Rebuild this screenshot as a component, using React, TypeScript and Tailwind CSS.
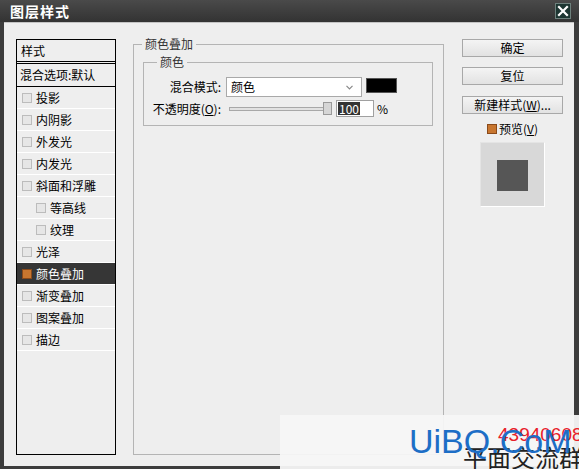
import React from "react";

const FONT = "font-['Noto_Sans_CJK_SC','Noto_Sans',sans-serif]";

const ITEMS: { label: string; sub?: boolean; on?: boolean }[] = [
  { label: "投影" },
  { label: "内阴影" },
  { label: "外发光" },
  { label: "内发光" },
  { label: "斜面和浮雕" },
  { label: "等高线", sub: true },
  { label: "纹理", sub: true },
  { label: "光泽" },
  { label: "颜色叠加", on: true },
  { label: "渐变叠加" },
  { label: "图案叠加" },
  { label: "描边" },
];

function Check({ on }: { on?: boolean }) {
  return (
    <span
      className={
        on
          ? "block w-[10px] h-[10px] shrink-0 bg-[#c8762f] border border-[#8a4a1a]"
          : "block w-[10px] h-[10px] shrink-0 bg-[#e6e6e6] border border-[#bcbcbc]"
      }
    />
  );
}

function Btn({ children }: { children: React.ReactNode }) {
  return (
    <div className="w-[101px] h-[18px] flex items-center justify-center text-[12px] leading-none text-black border border-[#a8a8a8] bg-gradient-to-b from-[#f4f4f4] to-[#e2e2e2]">
      {children}
    </div>
  );
}

export default function App() {
  return (
    <div className={`relative w-[579px] h-[469px] overflow-hidden bg-[#3c3c3c] flex flex-col ${FONT}`}>
      {/* title bar */}
      <div className="h-[22px] shrink-0 flex items-center justify-between pl-[10px] pr-[8px] bg-gradient-to-b from-[#4a4a4a] to-[#333333]">
        <span className="text-[14px] font-bold text-white leading-none tracking-[1px]">图层样式</span>
        <div className="w-[16px] h-[16px] bg-[#1d3632] border border-[#6d807c] flex items-center justify-center">
          <svg width="12" height="12" viewBox="0 0 12 12">
            <path d="M2 2 L10 10 M10 2 L2 10" stroke="#ffffff" strokeWidth="2.2" strokeLinecap="square" />
          </svg>
        </div>
      </div>

      {/* body */}
      <div className="ml-[4px] w-[570px] h-[444px] bg-[#eeeeee] border-t border-[#c4c4c4] flex items-start pt-[13px] pl-[12px] text-[12px] leading-[16px] text-black">
        {/* left list */}
        <div className="mt-[3px] w-[100px] h-[416px] border border-black bg-[#eeeeee] flex flex-col">
          <div className="h-[22px] border-b border-black flex items-center pl-[4px]">样式</div>
          <div className="h-[1px]" />
          <div className="h-[24px] border-y border-black flex items-center pl-[3px]">混合选项:默认</div>
          {ITEMS.map((it) => (
            <div
              key={it.label}
              className={`h-[22px] border-b border-white flex items-center gap-[4px] ${it.sub ? "pl-[19px]" : "pl-[5px]"} ${
                it.on ? "bg-[#363636] text-white" : ""
              }`}
            >
              <Check on={it.on} />
              <span>{it.label}</span>
            </div>
          ))}
        </div>

        {/* main group */}
        <fieldset className="ml-[17px] w-[311px] h-[419px] border border-[#b4b4b4]">
          <legend className="ml-[8px] px-[3px] text-[#333]">颜色叠加</legend>
          <fieldset className="ml-[9px] mt-[2px] w-[290px] border border-[#b4b4b4] pb-[8px]">
            <legend className="ml-[13px] px-[3px] text-[#333]">颜色</legend>
            <div className="mt-[7px] flex items-start">
              <div className="w-[77px] h-[20px] flex items-center justify-end">混合模式:</div>
              <div className="ml-[5px] w-[136px] h-[20px] bg-white border border-[#a9a9a9] flex items-center justify-between pl-[4px] pr-[8px]">
                <span>颜色</span>
                <svg width="7" height="5" viewBox="0 0 7 5">
                  <path d="M0.5 0.8 L3.5 3.8 L6.5 0.8" stroke="#888" strokeWidth="1.2" fill="none" />
                </svg>
              </div>
              <div className="ml-[4px] mt-[1px] w-[31px] h-[15px] bg-black border border-[#555]" />
            </div>
            <div className="mt-[3px] flex items-center h-[17px]">
              <div className="w-[77px] flex justify-end">
                不透明度(<span className="underline">O</span>):
              </div>
              <div className="relative ml-[8px] w-[103px] h-[13px] flex items-center">
                <div className="w-[98px] h-[4px] bg-[#e2e2e2] border border-[#a8a8a8]" />
                <div className="absolute right-0 top-0 w-[9px] h-[13px] bg-[#d6d6d6] border border-[#9a9a9a]" />
              </div>
              <div className="ml-[4px] w-[38px] h-[17px] bg-white border border-[#a0a0a0] flex items-center pl-[1px]">
                <span className="bg-[#333333] text-white px-[1px] leading-[13px]">100</span>
              </div>
              <span className="ml-[3px]">%</span>
            </div>
          </fieldset>
        </fieldset>

        {/* right column */}
        <div className="ml-[18px] mt-[3px] w-[101px] flex flex-col items-center">
          <Btn>确定</Btn>
          <div className="mt-[10px]">
            <Btn>复位</Btn>
          </div>
          <div className="mt-[11px]">
            <Btn>
              新建样式(<span className="underline">W</span>)...
            </Btn>
          </div>
          <div className="mt-[7px] h-[16px] flex items-center gap-[2px]">
            <Check on />
            <span>
              预览(<span className="underline">V</span>)
            </span>
          </div>
          <div className="mt-[5px] w-[65px] h-[65px] bg-[#d8d8d8] border border-[#e4e4e4] border-r-white border-b-white flex items-start pl-[16px] pt-[17px]">
            <div className="w-[31px] h-[31px] bg-[#565656]" />
          </div>
        </div>
      </div>

      {/* watermark overlay */}
      <div className="absolute left-[280px] top-[415px] w-[299px] h-[54px] bg-[#f5f5f5]/95 overflow-hidden">
        <span className="absolute left-[218px] top-[10px] text-[19px] leading-[20px] text-[#e8202a] font-['Liberation_Sans_Narrow','Liberation_Sans',sans-serif]">
          43940608
        </span>
        <span className="absolute left-[183px] top-[28px] text-[24px] leading-[28px] text-[#222] whitespace-nowrap">
          平面交流群
        </span>
        <span className="absolute left-[129px] top-[9px] text-[34px] leading-[34px] text-[#1d6ec6] font-['Liberation_Sans',sans-serif]">
          UiBQ.CoM
        </span>
      </div>
    </div>
  );
}
